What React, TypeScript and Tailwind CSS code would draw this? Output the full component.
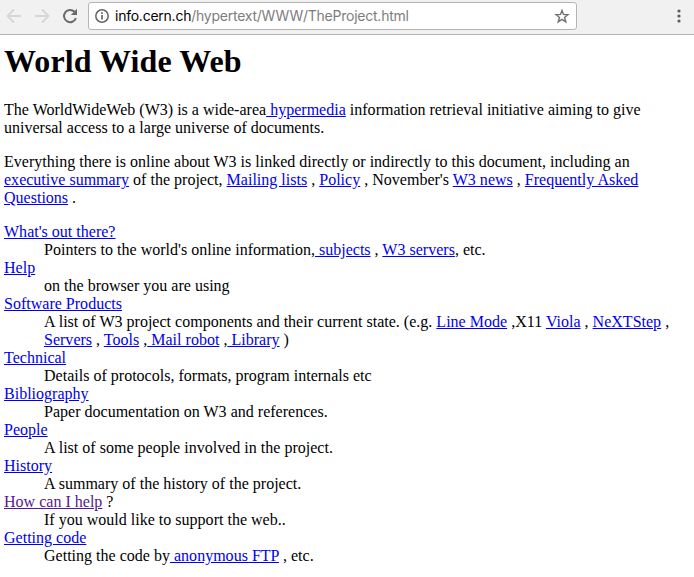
import React from 'react';

function Link({ children, visited = false }: { children: React.ReactNode; visited?: boolean }) {
  return (
    <a href="#" className={visited ? 'text-[#551a8b] underline' : 'text-[#0000ee] underline'}>
      {children}
    </a>
  );
}

function Toolbar() {
  return (
    <header className="flex h-[35px] shrink-0 items-start border-b border-[#b3b3b3] bg-[#f1f1f1]">
      <svg width="88" height="34" viewBox="0 0 88 34" fill="none" stroke="#d6d6d6" strokeWidth="1.8">
        <path d="M21 16H8M14 9.500L7.500 16L14 22.500M35 16H48M42 9.500L48.500 16L42 22.500" />
        <path d="M74.500 11.800A6.100 6.100 0 1 0 75.900 18" stroke="#6b6b6b" strokeWidth="2" />
        <path d="M77 8.800v6.200h-6.200z" fill="#6b6b6b" stroke="none" />
      </svg>
      <div className="mt-[2px] flex h-[28px] w-[489px] items-center rounded-[3px] border border-[#b5b5b5] bg-white pr-[6px] pl-[5px]">
        <svg width="16" height="16" viewBox="0 0 16 16" fill="none" stroke="#666" strokeWidth="1.5">
          <circle cx="8" cy="8" r="6.200" />
          <path d="M8 7v4.500M8 4.300v1.600" strokeWidth="1.700" />
        </svg>
        <span className="ml-[5px] grow font-['Inter',sans-serif] text-[14px] leading-5 tracking-[-0.24px] whitespace-nowrap text-black">
          info.cern.ch<span className="text-[#7d7d7d]">/hypertext/WWW/TheProject.html</span>
        </span>
        <svg width="16" height="16" viewBox="0 0 16 16" fill="none" stroke="#707070" strokeWidth="1.400">
          <path d="M8 2.400L9.500 6.400L14 6.700L10.500 9.500L11.800 13.900L8 11.400L4.200 13.900L5.500 9.500L2 6.700L6.500 6.400Z" />
        </svg>
      </div>
      <svg className="ml-[94px]" width="16" height="32" viewBox="0 0 16 32" fill="#5c5c5c">
        <circle cx="8" cy="11" r="1.600" />
        <circle cx="8" cy="16" r="1.600" />
        <circle cx="8" cy="21" r="1.600" />
      </svg>
    </header>
  );
}

export default function App() {
  return (
    <div className="flex h-[577px] w-[694px] flex-col overflow-hidden bg-white text-black">
      <Toolbar />
      <main className="px-1 font-['Liberation_Serif',serif] text-[16px] leading-[18px] tracking-[0.012px]">
        <h1 className="mt-[8px] text-[32px] leading-[37px] font-bold tracking-[0.08px]">World Wide Web</h1>
        <p className="mt-[21px]">
          The WorldWideWeb (W3) is a wide-area<Link> hypermedia</Link> information retrieval initiative aiming to give
          universal access to a large universe of documents.
        </p>
        <p className="mt-4">
          Everything there is online about W3 is linked directly or indirectly to this document, including an{' '}
          <Link>executive summary</Link> of the project, <Link>Mailing lists</Link> , <Link>Policy</Link> , November's{' '}
          <Link>W3 news</Link> , <Link>Frequently Asked Questions</Link> .
        </p>
        <dl className="mt-4 [&>dd]:ml-10">
          <dt><Link>What's out there?</Link></dt>
          <dd>Pointers to the world's online information,<Link> subjects</Link> , <Link>W3 servers</Link>, etc.</dd>
          <dt><Link>Help</Link></dt>
          <dd>on the browser you are using</dd>
          <dt><Link>Software Products</Link></dt>
          <dd>
            A list of W3 project components and their current state. (e.g. <Link>Line Mode</Link> ,X11{' '}
            <Link>Viola</Link> , <Link>NeXTStep</Link> , <Link>Servers</Link> , <Link>Tools</Link> ,
            <Link> Mail robot</Link> ,<Link> Library</Link> )
          </dd>
          <dt><Link>Technical</Link></dt>
          <dd>Details of protocols, formats, program internals etc</dd>
          <dt><Link>Bibliography</Link></dt>
          <dd>Paper documentation on W3 and references.</dd>
          <dt><Link>People</Link></dt>
          <dd>A list of some people involved in the project.</dd>
          <dt><Link>History</Link></dt>
          <dd>A summary of the history of the project.</dd>
          <dt><Link visited>How can I help</Link> ?</dt>
          <dd>If you would like to support the web..</dd>
          <dt><Link>Getting code</Link></dt>
          <dd>Getting the code by<Link> anonymous FTP</Link> , etc.</dd>
        </dl>
      </main>
    </div>
  );
}
